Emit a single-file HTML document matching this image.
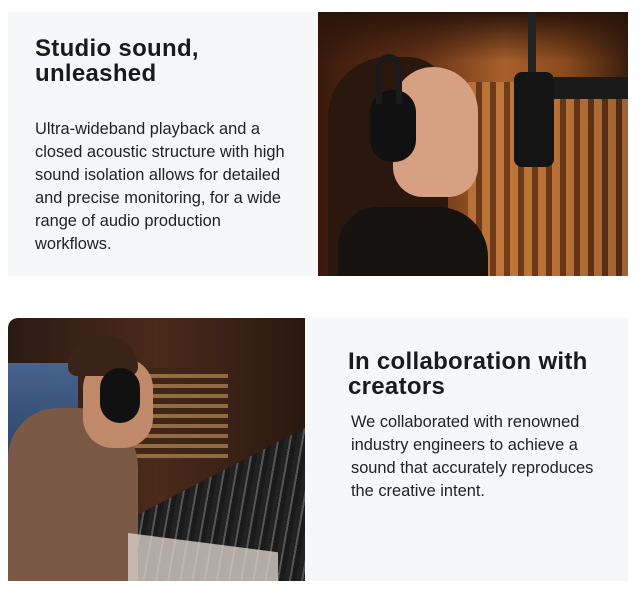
<!DOCTYPE html>
<html><head><meta charset="utf-8"><style>
*{margin:0;padding:0;box-sizing:border-box}
html,body{width:640px;height:589px;overflow:hidden}
body{background:#fff;font-family:"Liberation Sans",sans-serif;position:relative;color:#1a1a1a}
.box{position:absolute;background:#f6f7f9}
h2{font-size:24px;font-weight:bold;line-height:25px;letter-spacing:0.3px;position:absolute;white-space:nowrap}
p{font-size:16.4px;line-height:23px;color:#222;position:absolute;white-space:nowrap}
.img{position:absolute;overflow:hidden}
</style></head><body>
<div class="box" style="left:8px;top:12px;width:310px;height:264px"></div>
<h2 style="left:35px;top:36px">Studio sound,<br>unleashed</h2>
<p style="left:35px;top:118px">Ultra-wideband playback and a<br>closed acoustic structure with high<br>sound isolation allows for detailed<br>and precise monitoring, for a wide<br>range of audio production<br>workflows.</p>

<div class="img" style="left:318px;top:12px;width:310px;height:264px;background:linear-gradient(90deg,#3a1a0c 0%,#6a3418 35%,#a8602a 60%,#8a4a1c 80%,#3a1e10 100%)">
 <div style="position:absolute;left:150px;top:70px;width:160px;height:194px;background:repeating-linear-gradient(90deg,#c88040 0 8px,#5a2c12 8px 14px);opacity:.7"></div>
 <div style="position:absolute;left:0;top:0;width:310px;height:50px;background:linear-gradient(#2a140a,rgba(60,30,14,0))"></div>
 <div style="position:absolute;left:10px;top:45px;width:120px;height:219px;background:#2a170e;border-radius:60px 40px 0 0"></div>
 <div style="position:absolute;left:75px;top:55px;width:85px;height:130px;background:#d8a082;border-radius:40px 45px 30px 30px"></div>
 <div style="position:absolute;left:20px;top:195px;width:150px;height:69px;background:#161210;border-radius:40px 50px 0 0"></div>
 <div style="position:absolute;left:52px;top:78px;width:46px;height:72px;background:#111;border-radius:22px"></div>
 <div style="position:absolute;left:58px;top:42px;width:26px;height:50px;border:6px solid #1a1a1a;border-bottom:none;border-radius:14px 14px 0 0"></div>
 <div style="position:absolute;left:196px;top:60px;width:40px;height:95px;background:#141414;border-radius:8px"></div>
 <div style="position:absolute;left:210px;top:0;width:8px;height:60px;background:#222"></div>
 <div style="position:absolute;left:236px;top:65px;width:74px;height:22px;background:#1a1a1a"></div>
</div>

<div class="img" style="left:8px;top:318px;width:297px;height:263px;border-radius:10px 0 0 0;background:linear-gradient(90deg,#2a1a14,#4a2a1a 50%,#2a1810)">
 <div style="position:absolute;left:0;top:45px;width:70px;height:95px;background:linear-gradient(#4a6a9a,#2a4a70);opacity:.9"></div>
 <div style="position:absolute;left:120px;top:50px;width:100px;height:90px;background:repeating-linear-gradient(0deg,#c89a60 0 4px,#3a2414 4px 10px);opacity:.6"></div>
 <div style="position:absolute;left:120px;top:110px;width:177px;height:153px;background:repeating-linear-gradient(100deg,#222 0 5px,#555 5px 7px,#1a1a1a 7px 12px);clip-path:polygon(100% 0,100% 100%,0 100%,0 60%)"></div>
 <div style="position:absolute;left:0;top:90px;width:130px;height:173px;background:#7a5a46;border-radius:50px 60px 0 0"></div>
 <div style="position:absolute;left:75px;top:40px;width:70px;height:90px;background:#c08a6a;border-radius:30px"></div>
 <div style="position:absolute;left:60px;top:18px;width:70px;height:40px;background:#3a2418;border-radius:35px 35px 10px 10px"></div>
 <div style="position:absolute;left:92px;top:50px;width:40px;height:55px;background:#111;border-radius:20px"></div>
 <div style="position:absolute;left:120px;top:215px;width:150px;height:48px;background:#d8d0c8;clip-path:polygon(0 0,100% 40%,100% 100%,0 100%);opacity:.8"></div>
</div>
<div class="box" style="left:305px;top:318px;width:323px;height:263px"></div>
<h2 style="left:348px;top:349px">In collaboration with<br>creators</h2>
<p style="left:351px;top:411px">We collaborated with renowned<br>industry engineers to achieve a<br>sound that accurately reproduces<br>the creative intent.</p>
</body></html>
